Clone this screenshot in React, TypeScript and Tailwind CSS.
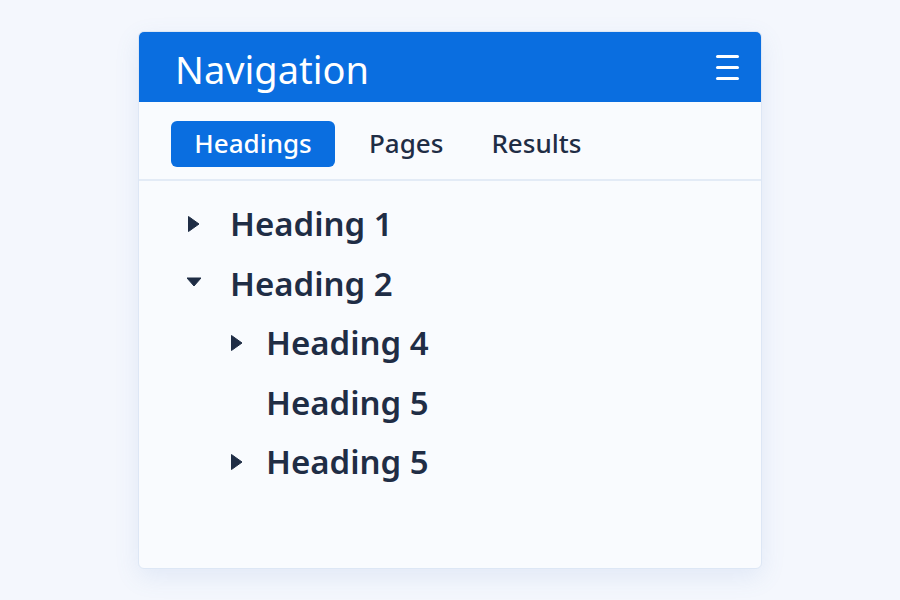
import React from "react";

interface Item {
  label: string;
  level: number;
  arrow?: "right" | "down";
}

const items: Item[] = [
  { label: "Heading 1", level: 0, arrow: "right" },
  { label: "Heading 2", level: 0, arrow: "down" },
  { label: "Heading 4", level: 1, arrow: "right" },
  { label: "Heading 5", level: 1 },
  { label: "Heading 5", level: 1, arrow: "right" },
];

function Caret({ dir }: { dir?: "right" | "down" }) {
  if (!dir) return <span className="w-[14px]" />;
  return (
    <svg width="14" height="18" viewBox="0 0 14 18" className="shrink-0">
      {dir === "right" ? (
        <path d="M1.5 1.5 L12 9 L1.5 16.5 Z" fill="#1f2d45" strokeLinejoin="round" stroke="#1f2d45" strokeWidth="1" />
      ) : (
        <path d="M0 4 L14 4 L7 12 Z" fill="#1f2d45" strokeLinejoin="round" stroke="#1f2d45" strokeWidth="1" />
      )}
    </svg>
  );
}

export default function App() {
  return (
    <div
      className="w-[900px] h-[600px] bg-[#f4f7fd] pt-[31px] pl-[138px]"
      style={{ fontFamily: '"Noto Sans", "Open Sans", sans-serif' }}
    >
      <div className="w-[624px] h-[538px] bg-[#f9fbfe] rounded-md border border-[#dde7f5] shadow-[0_8px_24px_rgba(90,130,200,0.12)] overflow-hidden flex flex-col">
        <div className="h-[70px] bg-[#0a6ee0] flex items-center justify-between pl-[36px] pr-[22px]">
          <span className="text-white text-[38px] leading-none pt-[4px]">Navigation</span>
          <div className="flex flex-col gap-[8px] w-[23px]">
            <span className="h-[3px] rounded-full bg-white" />
            <span className="h-[3px] rounded-full bg-white" />
            <span className="h-[3px] rounded-full bg-white" />
          </div>
        </div>
        <div className="h-[79px] border-b-2 border-[#e3ebf6] flex items-center pl-[32px] pt-[6px] text-[26px] font-medium text-[#1f2d45]">
          <span className="h-[46px] w-[164px] rounded-md bg-[#0a6ee0] text-white flex items-center justify-center">
            Headings
          </span>
          <span className="ml-[34px]">Pages</span>
          <span className="ml-[48px]">Results</span>
        </div>
        <div className="pt-[13px] flex flex-col">
          {items.map((it, i) => (
            <div
              key={i}
              className={`h-[59.5px] flex items-center text-[33px] font-semibold text-[#1f2d45] ${
                it.level === 0 ? "pl-[48px]" : "pl-[91px]"
              }`}
            >
              <Caret dir={it.arrow} />
              <span className={it.level === 0 ? "ml-[29px]" : "ml-[22px]"}>{it.label}</span>
            </div>
          ))}
        </div>
      </div>
    </div>
  );
}
